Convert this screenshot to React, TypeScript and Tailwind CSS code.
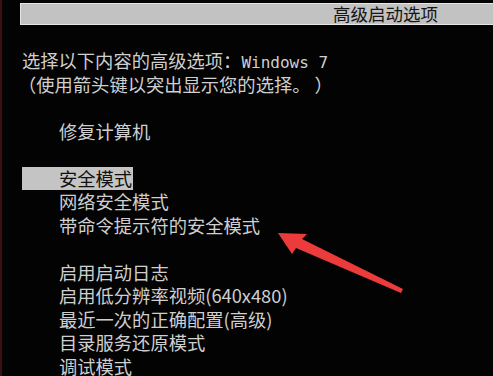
import React from "react";

const font = {
  fontFamily: '"Noto Sans CJK SC", "DejaVu Sans", sans-serif',
};

function Row({ children, selected = false, indent = true }: { children?: React.ReactNode; selected?: boolean; indent?: boolean }) {
  return (
    <div className="h-[23.5px] flex items-center pl-[20px] whitespace-nowrap">
      <span
        className={
          (indent ? "pl-[37px] " : "") +
          (selected ? "bg-[#c4c4c4] text-[#111] pr-[1px] h-[23px] flex items-center" : "")
        }
      >
        {children}
      </span>
    </div>
  );
}

export default function App() {
  return (
    <div
      className="relative w-[493px] h-[376px] bg-[#030303] text-[#cfcfcf] text-[18.3px] overflow-hidden border-l-2 border-[#3a1010]"
      style={font}
    >
      <div className="pt-[3px] pl-[18px]">
        <div className="h-[22px] bg-[#c2c2c2] border border-[#e6e6e6] border-r-0 flex items-center justify-end pr-[55px] text-[#151515] text-[17.5px]">
          高级启动选项
        </div>
      </div>
      <div className="pt-[24px] flex flex-col">
        <Row indent={false}>
          选择以下内容的高级选项：
          <span className="text-[16px]" style={{ fontFamily: '"DejaVu Sans Mono", monospace' }}>
            Windows 7
          </span>
        </Row>
        <Row indent={false}>
          <span className="-ml-[4px]">（使用箭头键以突出显示您的选择。 ）</span>
        </Row>
        <Row />
        <Row>修复计算机</Row>
        <Row />
        <Row selected>安全模式</Row>
        <Row>网络安全模式</Row>
        <Row>带命令提示符的安全模式</Row>
        <Row />
        <Row>启用启动日志</Row>
        <Row>启用低分辨率视频(640x480)</Row>
        <Row>最近一次的正确配置(高级)</Row>
        <Row>目录服务还原模式</Row>
        <Row>调试模式</Row>
      </div>
      <svg className="absolute left-0 top-0" width="493" height="376" viewBox="0 0 493 376">
        <polygon
          points="276,233 305,234 300,239 401,289 399,293 294,248 290,254"
          fill="#ec3b3b"
        />
      </svg>
    </div>
  );
}
